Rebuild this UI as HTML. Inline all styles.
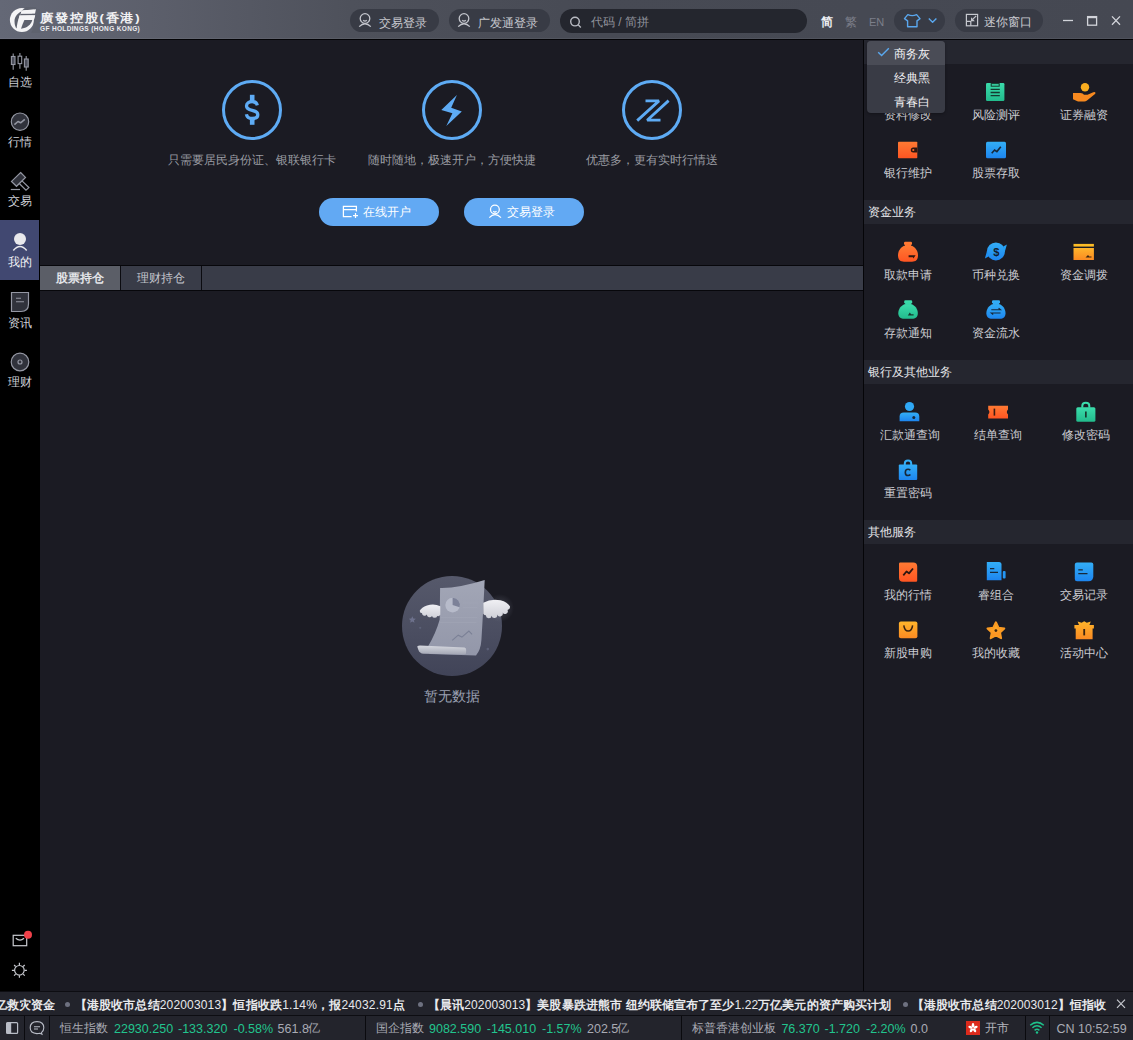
<!DOCTYPE html>
<html><head><meta charset="utf-8">
<style>
*{box-sizing:border-box}
html,body{margin:0;padding:0;width:1133px;height:1040px;overflow:hidden;background:#1b1c23;font-family:"Liberation Sans",sans-serif;font-size:12px;color:#c8c9cf}
.a{position:absolute}
.t{position:absolute;line-height:12px;white-space:nowrap}
#title{left:0;top:0;width:1133px;height:40px;background:linear-gradient(90deg,#646876 0px,#5c5f6b 150px,#4e515b 350px,#474a54 600px,#454852 1133px)}
#title:after{content:"";position:absolute;left:0;top:38px;width:1133px;height:1px;background:rgba(255,255,255,0.06)}
#titleline{left:0;top:39px;width:1133px;height:1px;background:#030306}
#side{left:0;top:40px;width:40px;height:951px;background:#000}
#main{left:40px;top:40px;width:823px;height:951px;background:#1b1b23}
#vsep{left:863px;top:40px;width:1px;height:951px;background:#050508}
#right{left:864px;top:40px;width:269px;height:951px;background:#1b1b23}
.pill{position:absolute;border-radius:12px;background:#383b45}
.hdr{position:absolute;left:864px;width:269px;height:24px;background:#25262f}
.hdr span{position:absolute;left:4px;top:6px;line-height:12px;color:#e6e6ea}
.it{position:absolute;width:88px;text-align:center}
.it .ic{position:absolute;left:34px;top:0;width:20px;height:20px}
.it .lb{position:absolute;left:0;top:27px;width:88px;line-height:12px;color:#cbccd2}
#ticker{left:0;top:991px;width:1133px;height:25px;background:#22232b;border-top:1px solid #0d0d12;border-bottom:1px solid #0d0d12}
#status{left:0;top:1016px;width:1133px;height:24px;background:#23242c}
.vl{position:absolute;top:1016px;width:1px;height:24px;background:#0a0a0e}
.g{color:#22c48e}
.n{position:absolute;top:1022px;font-size:12.5px;line-height:14px;white-space:nowrap}
</style></head><body>
<div id="title" class="a"></div>
<div id="titleline" class="a"></div>
<div id="side" class="a"></div>
<div id="main" class="a"></div>
<div id="vsep" class="a"></div>
<div id="right" class="a"></div>
<div id="ticker" class="a"></div>
<div id="status" class="a"></div>


<!-- SIDEBAR -->
<div class="a" style="left:0;top:220px;width:39px;height:60px;background:#414871"></div>
<svg class="a" style="left:0;top:40px" width="40" height="360" viewBox="0 40 40 360">
<g stroke="#9497a3" stroke-width="1.1" fill="none">
<path d="M13.2,53.5 V69.8 M19.9,53 V68.8 M26.2,55.9 V70.8"/>
<rect x="11.4" y="56.5" width="3.6" height="8" fill="#4c4f5b"/>
<rect x="18.1" y="56.2" width="3.6" height="7.4" fill="#000"/>
<rect x="24.4" y="59" width="3.8" height="8" fill="#4c4f5b"/>
<circle cx="20" cy="121.7" r="8.7" fill="#30323b" stroke-width="1.2"/>
<path d="M14.4,124.6 L18,121.5 L20.6,122.8 L24.8,119.4" stroke-width="1.6" stroke-linejoin="round"/>
<path d="M20.6,172.5 L25.5,177.4 L16.5,186.3 L11.5,181.4 Z" fill="#30323b" stroke-width="1.2"/>
<path d="M22,180.9 L28.9,187.6 L26,190.2 L19.3,183.5" stroke-width="1.2"/>
<path d="M10.8,189.5 H20" stroke-width="1.2"/>
<path d="M11.5,292.5 H28.5 V304 Q28.5,311.5 21,311.5 H11.5 Z" fill="#30323b" stroke-width="1.2"/>
<path d="M16,298.3 H21 M16,301.8 H24" stroke-width="1.1"/>
<circle cx="20" cy="362" r="8.8" fill="#30323b" stroke-width="1.2"/>
<circle cx="20" cy="362" r="2" stroke-width="1.2"/>
</g>
<circle cx="20" cy="239" r="6" fill="#e8e8ec"/>
<path d="M13.3,250.5 Q20,242.5 26.7,250.5" stroke="#e8e8ec" stroke-width="1.5" fill="none"/>
</svg>
<div class="t" style="left:8px;top:76px;color:#cdcfd6">自选</div>
<div class="t" style="left:8px;top:136px;color:#cdcfd6">行情</div>
<div class="t" style="left:8px;top:195px;color:#cdcfd6">交易</div>
<div class="t" style="left:8px;top:256px;color:#f2f3f6">我的</div>
<div class="t" style="left:8px;top:317px;color:#cdcfd6">资讯</div>
<div class="t" style="left:8px;top:376px;color:#cdcfd6">理财</div>
<svg class="a" style="left:0;top:925px" width="40" height="60" viewBox="0 925 40 60">
<g stroke="#c8cad0" stroke-width="1.2" fill="none">
<rect x="13.2" y="935.3" width="13.5" height="10.4"/>
<path d="M15.8,938.3 Q20,942 24,938.3"/>
<circle cx="19.4" cy="970.3" r="4.8"/>
<path d="M19.4,962.8 V965 M19.4,975.6 V977.8 M11.9,970.3 H14.1 M24.7,970.3 H26.9 M14.1,965 L15.6,966.5 M23.2,974.1 L24.7,975.6 M24.7,965 L23.2,966.5 M15.6,974.1 L14.1,975.6"/>
</g>
<circle cx="28" cy="934.8" r="4" fill="#f0414a"/>
</svg>


<!-- MAIN TOP -->
<svg class="a" style="left:200px;top:70px" width="500" height="80" viewBox="200 70 500 80">
<g fill="none" stroke="#5eabf4" stroke-width="3">
<circle cx="252" cy="110" r="28.5"/>
<circle cx="452" cy="110" r="28.5"/>
<circle cx="652" cy="110" r="28.5"/>
<path d="M257.3,105.4 C256.7,103 254.6,101.6 252.2,101.6 C248.9,101.6 246.5,103.3 246.5,105.9 C246.5,108.7 249,109.5 252.2,110.3 C255.4,111.1 257.8,112.1 257.8,114.7 C257.8,117.1 255.4,118.5 252.2,118.5 C249.1,118.5 246.9,117.1 246.4,114.3" stroke-width="3.3"/>
<path d="M645.5,100.9 H659 L637.2,120.6" stroke-width="2.8" stroke-linejoin="bevel"/>
<path d="M668.6,100.6 L647.2,120.2 H660.5" stroke-width="2.8" stroke-linejoin="bevel"/>
</g>
<rect x="249.9" y="94.8" width="4.6" height="7" fill="#5eabf4"/>
<rect x="249.9" y="117.8" width="4.6" height="7" fill="#5eabf4"/>
<path d="M456.9,95 L441.3,110 L452.4,113.2 L446.3,126 L461.8,111.4 L451.2,107.7 Z" fill="#5eabf4"/>
</svg>
<div class="t" style="left:168px;top:154px;color:#9a9ba2">只需要居民身份证、银联银行卡</div>
<div class="t" style="left:368px;top:154px;color:#9a9ba2">随时随地，极速开户，方便快捷</div>
<div class="t" style="left:586px;top:154px;color:#9a9ba2">优惠多，更有实时行情送</div>

<div class="a" style="left:319px;top:198px;width:120px;height:28px;border-radius:14px;background:#62a9f3"></div>
<div class="a" style="left:464px;top:198px;width:120px;height:28px;border-radius:14px;background:#62a9f3"></div>
<svg class="a" style="left:338px;top:200px" width="170" height="24" viewBox="338 200 170 24">
<g fill="none" stroke="#fff" stroke-width="1.25">
<path d="M351.6,216.5 H343.4 V206.4 H356.4 V211.4 M343.4,209.5 H356.4 M355.5,213 V218 M353,215.5 H358"/>
<circle cx="494.9" cy="209.5" r="4.4"/>
<path d="M493.3,211.3 Q494.9,213 496.5,211.3"/>
<path d="M489.3,217.6 Q495,211.5 501,217.6"/>
</g>
</svg>
<div class="t" style="left:363px;top:206px;color:#fff">在线开户</div>
<div class="t" style="left:507px;top:206px;color:#fff">交易登录</div>

<!-- TABS -->
<div class="a" style="left:40px;top:265px;width:823px;height:26px;background:#07070b"></div>
<div class="a" style="left:40px;top:266px;width:823px;height:24px;background:#393c48"></div>
<div class="a" style="left:40px;top:266px;width:80px;height:24px;background:#5b5e67"></div>
<div class="a" style="left:120px;top:266px;width:1px;height:24px;background:#0b0b10"></div>
<div class="a" style="left:201px;top:266px;width:1px;height:24px;background:#0b0b10"></div>
<div class="t" style="left:56px;top:272px;font-weight:bold;color:#e4e5e9">股票持仓</div>
<div class="t" style="left:137px;top:272px;color:#c4c5cc">理财持仓</div>


<!-- RIGHT PANEL -->
<div class="hdr" style="top:40px"><span></span></div>
<div class="hdr" style="top:200px"><span>资金业务</span></div>
<div class="hdr" style="top:360px"><span>银行及其他业务</span></div>
<div class="hdr" style="top:520px"><span>其他服务</span></div>
<svg class="a" style="left:864px;top:40px" width="269" height="620" viewBox="864 40 269 620">
<defs>
<linearGradient id="gT" x1="0" y1="0" x2="0" y2="1"><stop offset="0" stop-color="#3bdcab"/><stop offset="1" stop-color="#22bb8c"/></linearGradient>
<linearGradient id="gR" x1="0" y1="0" x2="0" y2="1"><stop offset="0" stop-color="#ff7a33"/><stop offset="1" stop-color="#ff5522"/></linearGradient>
<linearGradient id="gB" x1="0" y1="0" x2="0" y2="1"><stop offset="0" stop-color="#33aef6"/><stop offset="1" stop-color="#1d85ef"/></linearGradient>
<linearGradient id="gO" x1="0" y1="0" x2="0" y2="1"><stop offset="0" stop-color="#ffb52b"/><stop offset="1" stop-color="#fb8a22"/></linearGradient>
</defs>
<!-- clipboard -->
<rect x="986" y="83" width="18.4" height="18" rx="1.2" fill="url(#gT)"/>
<rect x="991.2" y="83.6" width="8" height="2.6" fill="none" stroke="#16332b" stroke-width="1"/>
<path d="M990.6,89.3 H999.8 M990.6,92.5 H999.8 M990.6,95.7 H999.8" stroke="#153a30" stroke-width="1.3"/>
<!-- hand coin -->
<circle cx="1085" cy="87.2" r="4.2" fill="#f9ad1f"/>
<path d="M1073,93 H1080.5 Q1083,93 1084,94.8 H1087.5 L1093.3,92.2 Q1096.2,91.5 1095.3,93.8 L1087,100.6 Q1085.8,101.5 1084.3,101.5 H1078 L1073,99.3 Z" fill="#f7891f"/>
<!-- wallet -->
<rect x="898" y="141.8" width="19.3" height="16.4" rx="0.8" fill="url(#gR)"/>
<path d="M913.3,147.5 H917.3 V152.5 H913.3 A2.5,2.5 0 0 1 913.3,147.5 Z" fill="#2e1610"/><circle cx="913.3" cy="150" r="1.1" fill="#ff6a2a"/>
<!-- chart -->
<rect x="986" y="141.8" width="20" height="16.4" rx="1.5" fill="url(#gB)"/>
<path d="M991.7,153.2 L994.6,150 L996.9,151.6 L1000.8,146.8" fill="none" stroke="#17283a" stroke-width="1.6"/>
<!-- bag orange -->
<rect x="904" y="241.8" width="8" height="3.2" rx="1.2" fill="#ff7a33"/>
<rect x="905" y="244" width="6" height="2.5" fill="#ff7631"/>
<path d="M904,245.8 C899.5,248.2 898,252 898,255.5 C898,260 900.5,261.7 904,261.7 H912 C915.5,261.7 918,260 918,255.5 C918,252 916.5,248.2 912,245.8 Z" fill="url(#gR)"/>
<path d="M908.6,255.2 H915.6 L913.4,258.5 L913,257.3 H908.6 Z" fill="#2e1610"/>
<!-- exchange coin -->
<circle cx="995.9" cy="251.4" r="9" fill="url(#gB)"/>
<path d="M1004.6,252.5 L1006.9,244.4 L1003.2,246.4 Z" fill="#25a0f5"/>
<path d="M987.2,250.3 L984.9,258.4 L988.6,256.4 Z" fill="#2090f2"/>
<text x="996.2" y="255.6" font-family="Liberation Sans" font-size="11" font-weight="bold" fill="#12202e" text-anchor="middle">$</text>
<!-- card -->
<rect x="1073.5" y="243.9" width="20.4" height="2.7" fill="#fcbc26"/>
<rect x="1073.5" y="248" width="20.4" height="12" fill="url(#gO)"/>
<path d="M1085.5,257.6 L1088,255 L1089.3,256.5 H1091.5 V257.6 Z" fill="#3a2410"/>
<!-- bag green -->
<rect x="904.2" y="300.2" width="8" height="3.2" rx="1.2" fill="#3bdcab"/>
<rect x="905.2" y="302.4" width="6" height="2.5" fill="#38d8a8"/>
<path d="M904.2,304.2 C899.8,306.5 898.3,310 898.3,313.3 C898.3,317.3 900.7,318.8 904.2,318.8 H912 C915.4,318.8 917.8,317.3 917.8,313.3 C917.8,310 916.4,306.5 912,304.2 Z" fill="url(#gT)"/>
<path d="M907.8,315.4 L909.8,312.6 L911.1,314.3 H913.6 V315.4 Z" fill="#163a2f"/>
<!-- bag blue -->
<rect x="992" y="300.2" width="8" height="3.2" rx="1.2" fill="#33aef6"/>
<rect x="993" y="302.4" width="6" height="2.5" fill="#30aaf6"/>
<path d="M992,304.2 C987.8,306.5 986.4,310 986.4,313.3 C986.4,317.3 988.7,318.8 992,318.8 H1000 C1003.2,318.8 1005.5,317.3 1005.5,313.3 C1005.5,310 1004.1,306.5 1000,304.2 Z" fill="url(#gB)"/>
<path d="M991.3,309.8 H1000.5 L998.6,308.3 M1000.5,313 H991.3 L993.2,314.5" fill="none" stroke="#16283a" stroke-width="1.1"/>
<!-- user blue -->
<circle cx="909.5" cy="406.5" r="4.6" fill="#2fa8f5"/>
<path d="M899.6,421.2 V416.5 Q899.6,412.6 903.8,412.6 H915.1 Q919.3,412.6 919.3,416.5 V421.2 Z" fill="url(#gB)"/>
<circle cx="913.8" cy="417.4" r="1.5" fill="#16283a"/>
<!-- ticket -->
<path d="M988.2,405.8 H1008 V409.6 Q1005.6,412.1 1008,414.6 V418.4 H988.2 V414.6 Q990.6,412.1 988.2,409.6 Z" fill="url(#gR)"/>
<rect x="993.6" y="408.6" width="1.6" height="7" fill="#3b1c12"/>
<!-- lock teal -->
<path d="M1082.3,407.8 V405.7 Q1082.3,402.7 1085.8,402.7 Q1089.3,402.7 1089.3,405.7 V407.8" fill="none" stroke="#3bdcab" stroke-width="2"/>
<rect x="1076.3" y="407.3" width="19.1" height="14.4" rx="1.5" fill="url(#gT)"/>
<rect x="1085" y="411.5" width="1.7" height="6" fill="#163a2f"/>
<!-- lock blue C -->
<path d="M904.8,465 V463.5 Q904.8,460.6 908,460.6 Q911.2,460.6 911.2,463.5 V465" fill="none" stroke="#33aef6" stroke-width="2"/>
<rect x="898.8" y="464.5" width="18.4" height="15.4" rx="1" fill="url(#gB)"/>
<path d="M910.3,470.3 Q909.5,469.3 908,469.3 Q905.3,469.3 905.3,472.4 Q905.3,475.5 908,475.5 Q909.5,475.5 910.4,474.4" fill="none" stroke="#16283a" stroke-width="1.6"/>
<!-- orange chart -->
<path d="M900.2,562.6 H913.2 Q917.2,562.6 917.2,566.6 V580.5 Q917.2,581.7 916,581.7 H903 Q899,581.7 899,577.7 V563.8 Q899,562.6 900.2,562.6 Z" fill="url(#gR)"/>
<path d="M903.3,575.3 L906.5,571.5 L909,573.3 L913,568.5" fill="none" stroke="#2e1610" stroke-width="1.8" stroke-linejoin="round"/>
<!-- doc w/ tab -->
<path d="M986.8,562 H999 Q1001.5,562 1001.5,564.5 V580.2 H986.8 Z" fill="url(#gB)"/>
<rect x="1002.8" y="571" width="2.8" height="7.6" rx="1" fill="#2596f2"/>
<path d="M990,568.6 H994.3 M990,572.4 H998" stroke="#16283a" stroke-width="1.3"/>
<!-- doc rounded -->
<path d="M1077,562.6 H1091.3 Q1093.3,562.6 1093.3,564.6 V576.2 Q1093.3,581.2 1088.3,581.2 H1077 Q1074.8,581.2 1074.8,579 V564.8 Q1074.8,562.6 1077,562.6 Z" fill="url(#gB)"/>
<path d="M1078.3,569.8 H1082.8 M1078.3,573.6 H1087.5" stroke="#16283a" stroke-width="1.3"/>
<!-- bag yellow -->
<rect x="898.9" y="621.6" width="18.5" height="16.6" rx="2" fill="url(#gO)"/>
<path d="M903.8,625.3 Q904.5,631 908.2,631 Q911.9,631 912.6,625.3" fill="none" stroke="#3a2410" stroke-width="1.5"/>
<!-- star -->
<path d="M995.9,622.3 L998.5,627.7 L1004.3,628.5 L1000,632.5 L1001.1,638.2 L995.9,635.3 L990.7,638.2 L991.8,632.5 L987.5,628.5 L993.3,627.7 Z" fill="url(#gO)" stroke="#fa9a22" stroke-width="2" stroke-linejoin="round"/>
<circle cx="995.9" cy="630.6" r="1.4" fill="#3a2410"/>
<!-- gift -->
<path d="M1074.4,625 H1079 L1077.6,621.6 L1081.6,622.8 L1084.2,621.2 L1086.8,622.8 L1090.8,621.6 L1089.4,625 H1093.9 V628.6 H1092.6 V639.2 H1075.7 V628.6 H1074.4 Z" fill="url(#gO)"/>
<rect x="1083.3" y="629" width="1.8" height="6.4" fill="#3a2410"/>
</svg>
<div class="t" style="left:864px;top:109px;width:88px;text-align:center;color:#cbccd2">资料修改</div>
<div class="t" style="left:952px;top:109px;width:88px;text-align:center;color:#cbccd2">风险测评</div>
<div class="t" style="left:1040px;top:109px;width:88px;text-align:center;color:#cbccd2">证券融资</div>
<div class="t" style="left:864px;top:167px;width:88px;text-align:center;color:#cbccd2">银行维护</div>
<div class="t" style="left:952px;top:167px;width:88px;text-align:center;color:#cbccd2">股票存取</div>
<div class="t" style="left:864px;top:269px;width:88px;text-align:center;color:#cbccd2">取款申请</div>
<div class="t" style="left:952px;top:269px;width:88px;text-align:center;color:#cbccd2">币种兑换</div>
<div class="t" style="left:1040px;top:269px;width:88px;text-align:center;color:#cbccd2">资金调拨</div>
<div class="t" style="left:864px;top:327px;width:88px;text-align:center;color:#cbccd2">存款通知</div>
<div class="t" style="left:952px;top:327px;width:88px;text-align:center;color:#cbccd2">资金流水</div>
<div class="t" style="left:865.5px;top:429px;width:88px;text-align:center;color:#cbccd2">汇款通查询</div>
<div class="t" style="left:953.5px;top:429px;width:88px;text-align:center;color:#cbccd2">结单查询</div>
<div class="t" style="left:1041.5px;top:429px;width:88px;text-align:center;color:#cbccd2">修改密码</div>
<div class="t" style="left:864px;top:487px;width:88px;text-align:center;color:#cbccd2">重置密码</div>
<div class="t" style="left:864px;top:589px;width:88px;text-align:center;color:#cbccd2">我的行情</div>
<div class="t" style="left:952px;top:589px;width:88px;text-align:center;color:#cbccd2">睿组合</div>
<div class="t" style="left:1040px;top:589px;width:88px;text-align:center;color:#cbccd2">交易记录</div>
<div class="t" style="left:864px;top:647px;width:88px;text-align:center;color:#cbccd2">新股申购</div>
<div class="t" style="left:952px;top:647px;width:88px;text-align:center;color:#cbccd2">我的收藏</div>
<div class="t" style="left:1040px;top:647px;width:88px;text-align:center;color:#cbccd2">活动中心</div>

<!-- DROPDOWN -->
<div class="a" style="left:867px;top:41px;width:78px;height:72px;border-radius:4px;background:#393b45;box-shadow:0 1px 3px rgba(0,0,0,0.3)"></div>
<div class="a" style="left:867px;top:41px;width:78px;height:24px;border-radius:4px 4px 0 0;background:#4a4c56"></div>
<svg class="a" style="left:874px;top:44px" width="18" height="16" viewBox="874 44 18 16"><path d="M878.2,52.3 L881.6,55.6 L888.8,48.3" fill="none" stroke="#5aa9f0" stroke-width="1.4"/></svg>
<div class="t" style="left:894px;top:48px;color:#f4f4f6">商务灰</div>
<div class="t" style="left:894px;top:72px;color:#f4f4f6">经典黑</div>
<div class="t" style="left:894px;top:96px;color:#f4f4f6">青春白</div>


<!-- EMPTY STATE -->
<svg class="a" style="left:390px;top:565px" width="140" height="120" viewBox="390 565 140 120">
<defs>
<linearGradient id="eC" x1="0" y1="0" x2="0" y2="1"><stop offset="0" stop-color="#56596b"/><stop offset="0.55" stop-color="#4b4e61"/><stop offset="1" stop-color="#414458"/></linearGradient>
<linearGradient id="eP" x1="0" y1="0" x2="0" y2="1"><stop offset="0" stop-color="#a2a6b6"/><stop offset="1" stop-color="#9397a9"/></linearGradient>
<linearGradient id="eR" x1="0" y1="0" x2="0" y2="1"><stop offset="0" stop-color="#d6d8df"/><stop offset="1" stop-color="#a3a6b4"/></linearGradient>
<linearGradient id="eW" x1="0" y1="0" x2="0" y2="1"><stop offset="0" stop-color="#f0f0f4"/><stop offset="1" stop-color="#cfd0d8"/></linearGradient>
<radialGradient id="eG" cx="0.5" cy="0.5" r="0.5"><stop offset="0" stop-color="#9a9eb0" stop-opacity="0.32"/><stop offset="1" stop-color="#9a9eb0" stop-opacity="0"/></radialGradient>
</defs>
<circle cx="452" cy="626" r="50" fill="url(#eC)"/>
<circle cx="500" cy="608" r="14" fill="url(#eG)"/>
<path d="M440.1,588 Q458,588.5 484.7,580.1 L484.3,588 Q483,615 481.4,640 Q480.8,650 476,655.4 L430,654 Q425,650 428,646.4 Q436,633 439.7,619.5 Z" fill="url(#eP)"/>
<path d="M417.2,646.4 Q418.2,645.5 420,645.5 L464.5,647.6 Q466.2,648 466.2,650 L466,653.6 Q465.5,654.5 464,654.5 L423.5,653.8 Q419.5,653.5 418.2,649.5 Z" fill="url(#eR)"/>
<path d="M463,603 H478 M463,607.5 H477.5 M441,617.5 H477 M440,622.5 H476.5" stroke="#a3a7b6" stroke-width="0.5"/>
<circle cx="452.6" cy="605.1" r="7.3" fill="#b7bbca"/>
<path d="M452.6,605.1 V597.8 A7.3,7.3 0 0 1 459.6,607.2 Z" fill="#7c8198"/>
<path d="M452.2,640.3 L458.2,635.2 L461.9,637.1 L468.9,631.1 L472.1,634.3" fill="none" stroke="#7b8096" stroke-width="1.1"/>
<path d="M440.3,606.3 Q434,603 427,605.5 Q421.5,607.5 419.7,610.8 Q419.5,613 422,613.2 A2.6,2.6 0 0 0 426.8,614.6 A2.8,2.8 0 0 0 432,615.9 A2.8,2.8 0 0 0 437.3,616 A2.6,2.6 0 0 0 440.3,614.8 Z" fill="url(#eW)"/>
<path d="M483.3,602.8 Q491,598.5 500.5,600.3 Q507.5,602 510,606.5 Q510.3,609.5 507.5,610 A2.6,2.6 0 0 1 502.6,612.4 A2.8,2.8 0 0 1 497.2,614.6 A2.8,2.8 0 0 1 491.6,615.7 A2.8,2.8 0 0 1 486,615.2 A2.4,2.4 0 0 1 483.3,613.8 Z" fill="url(#eW)"/>
<path d="M412.3,616.3 L413.3,618.6 L415.8,618.8 L413.9,620.4 L414.5,622.8 L412.3,621.5 L410.1,622.8 L410.7,620.4 L408.8,618.8 L411.3,618.6 Z" fill="#6d718c"/>
<circle cx="420.2" cy="627.8" r="1.1" fill="#5c6077"/>
<circle cx="487.8" cy="649.1" r="1.3" fill="#5c6077"/>
</svg>
<div class="t" style="left:424px;top:689px;font-size:14px;line-height:14px;color:#9aa0b2">暂无数据</div>

<!-- TICKER -->
<div class="t" style="left:-5.5px;top:999px;font-weight:bold;color:#e8e9ec">亿救灾资金</div>
<div class="a" style="left:65px;top:1001.5px;width:5px;height:5px;border-radius:3px;background:#6e7180"></div>
<div class="t" style="left:74.5px;top:999px;font-weight:bold;color:#e8e9ec;letter-spacing:0.17px">【港股收市总结<span style="font-weight:normal">202003013</span>】恒指收跌<span style="font-weight:normal">1.14%</span>，报<span style="font-weight:normal">24032.91</span>点</div>
<div class="a" style="left:417.5px;top:1001.5px;width:5px;height:5px;border-radius:3px;background:#6e7180"></div>
<div class="t" style="left:428px;top:999px;font-weight:bold;color:#e8e9ec;letter-spacing:0.1px">【晨讯<span style="font-weight:normal">202003013</span>】美股暴跌进熊市 纽约联储宣布了至少<span style="font-weight:normal">1.22</span>万亿美元的资产购买计划</div>
<div class="a" style="left:903px;top:1001.5px;width:5px;height:5px;border-radius:3px;background:#6e7180"></div>
<div class="t" style="left:912px;top:999px;font-weight:bold;color:#e8e9ec;letter-spacing:0.1px">【港股收市总结<span style="font-weight:normal">202003012</span>】恒指收</div>
<div class="a" style="left:1110px;top:992px;width:23px;height:23px;background:#22232b"></div>
<svg class="a" style="left:1112px;top:995px" width="18" height="16" viewBox="1112 995 18 16"><path d="M1117,999.6 L1125,1007.8 M1125,999.6 L1117,1007.8" stroke="#c6c8ce" stroke-width="1.2"/></svg>

<!-- STATUS -->
<div class="vl" style="left:24px"></div>
<div class="vl" style="left:49px"></div>
<div class="vl" style="left:365px"></div>
<div class="vl" style="left:681px"></div>
<div class="vl" style="left:1025px"></div>
<div class="vl" style="left:1049px"></div>
<svg class="a" style="left:0;top:1016px" width="50" height="24" viewBox="0 1016 50 24">
<rect x="6.6" y="1022.6" width="11" height="10.8" rx="1" fill="none" stroke="#b8bcc6" stroke-width="1.2"/>
<rect x="6.6" y="1022.6" width="4.6" height="10.8" fill="#b8bcc6"/>
<path d="M36.9,1033.6 Q30.2,1033.4 30.2,1027.8 Q30.2,1021.6 37,1021.6 Q43.8,1021.6 43.8,1027.8 Q43.8,1031 41.4,1032.6 L42,1034.3 L39.8,1033.3 Q38.5,1033.6 36.9,1033.6 Z" fill="none" stroke="#b8bcc6" stroke-width="1.1"/>
<path d="M34,1026.7 H40 M34,1029 H38" stroke="#b8bcc6" stroke-width="1.1"/>
</svg>
<div class="t" style="left:60px;top:1022px;color:#a9abb4">恒生指数</div>
<div class="n g" style="left:114px">22930.250</div>
<div class="n g" style="left:178px">-133.320</div>
<div class="n g" style="left:233.5px">-0.58%</div>
<div class="n" style="left:277.6px;color:#a9abb4">561.8</div><div class="t" style="left:308px;top:1022px;color:#a9abb4">亿</div>
<div class="t" style="left:376px;top:1022px;color:#a9abb4">国企指数</div>
<div class="n g" style="left:429px">9082.590</div>
<div class="n g" style="left:486.8px">-145.010</div>
<div class="n g" style="left:542px">-1.57%</div>
<div class="n" style="left:587px;color:#a9abb4">202.5</div><div class="t" style="left:617px;top:1022px;color:#a9abb4">亿</div>
<div class="t" style="left:692px;top:1022px;color:#a9abb4">标普香港创业板</div>
<div class="n g" style="left:781.4px">76.370</div>
<div class="n g" style="left:824.5px">-1.720</div>
<div class="n g" style="left:866px">-2.20%</div>
<div class="n" style="left:910.5px;color:#a9abb4">0.0</div>
<svg class="a" style="left:964px;top:1019px" width="18" height="18" viewBox="964 1019 18 18">
<rect x="966" y="1021" width="14" height="14" fill="#dc2a1c"/>
<g fill="#fff"><ellipse cx="973" cy="1025.3" rx="1.3" ry="2.2"/><ellipse cx="973" cy="1025.3" rx="1.3" ry="2.2" transform="rotate(72 973 1028)"/><ellipse cx="973" cy="1025.3" rx="1.3" ry="2.2" transform="rotate(144 973 1028)"/><ellipse cx="973" cy="1025.3" rx="1.3" ry="2.2" transform="rotate(216 973 1028)"/><ellipse cx="973" cy="1025.3" rx="1.3" ry="2.2" transform="rotate(288 973 1028)"/></g>
</svg>
<div class="t" style="left:985px;top:1022px;color:#b3b5bd">开市</div>
<svg class="a" style="left:1028px;top:1018px" width="18" height="18" viewBox="1028 1018 18 18">
<g fill="none" stroke="#1ec28b" stroke-width="1.5"><path d="M1030.2,1025.2 Q1037,1019.5 1043.8,1025.2"/><path d="M1032.4,1027.8 Q1037,1023.8 1041.6,1027.8"/><path d="M1034.6,1030.3 Q1037,1028.4 1039.4,1030.3"/></g>
<circle cx="1037" cy="1032.5" r="1.2" fill="#1ec28b"/>
</svg>
<div class="n" style="left:1056.5px;color:#a9abb4">CN 10:52:59</div>

<!-- TITLE BAR -->
<svg class="a" style="left:0;top:0" width="46" height="36" viewBox="0 0 46 36">
<circle cx="21.9" cy="20.1" r="12" fill="#f4f4f6"/>
<path fill="#f4f4f6" d="M21.9,10.4 L36,9.3 L35,13.5 L20.8,13.6 Z"/>
<path fill="#f4f4f6" d="M19.6,15.6 L35.2,15.3 L33.9,19.9 L18.7,19.9 Z"/>
<g fill="#5e626e">
<path d="M23.8,10.2 C18,12.5 14.5,16.5 14.5,21.2 C14.5,24.8 15.5,27.3 16.6,28.6 C17,24.5 17.9,20.5 19.6,15.6 L20.8,13.6 L21.9,10.4 Z"/>
<path d="M20.8,13.7 L35.5,13.55 L35.2,15.35 L19.6,15.6 Z"/>
<path d="M24.4,19.95 L32.3,19.95 C31,24.6 27,28 21,28.7 C22,25.6 23.1,22.6 24.4,19.95 Z"/>
<path d="M33.8,9 L40,9 L40,33 L31,33 C33,30 34.6,25 34.2,19.9 L35.2,15.35 Z" />
<path d="M26,7 L36.2,7 L36,9.3 L21.9,10.4 Z"/>
</g>
<path fill="#f4f4f6" d="M21.9,10.4 L36,9.3 L35,13.5 L20.8,13.6 Z"/>
<path fill="#f4f4f6" d="M19.6,15.6 L35.2,15.3 L33.9,19.9 L18.7,19.9 Z"/>
</svg>
<div class="t" style="left:40px;top:12px;font-size:13px;line-height:13px;font-weight:bold;color:#f2f2f4;letter-spacing:1.85px;transform:scaleY(0.9);transform-origin:0 0">廣發控股(香港)</div>
<div class="t" style="left:40px;top:25px;font-size:6.5px;line-height:7px;font-weight:bold;color:#ececf0;letter-spacing:0.35px">GF HOLDINGS (HONG KONG)</div>

<div class="pill" style="left:350px;top:9px;width:89px;height:23px"></div>
<svg class="a" style="left:354px;top:10px" width="22" height="22" viewBox="354 10 22 22"><g fill="none" stroke="#c3c5cc" stroke-width="1.3"><circle cx="365" cy="18.5" r="4.8"/><path d="M363.2,20.2 Q365,22 366.8,20.2"/><path d="M359.2,26.6 Q365,21 370.8,26.6"/></g></svg>
<div class="t" style="left:379px;top:17px;color:#c6c7cd">交易登录</div>

<div class="pill" style="left:449px;top:9px;width:101px;height:23px"></div>
<svg class="a" style="left:453px;top:10px" width="22" height="22" viewBox="453 10 22 22"><g fill="none" stroke="#c3c5cc" stroke-width="1.3"><circle cx="464" cy="18.5" r="4.8"/><path d="M462.2,20.2 Q464,22 465.8,20.2"/><path d="M458.2,26.6 Q464,21 469.8,26.6"/></g></svg>
<div class="t" style="left:478px;top:17px;color:#c6c7cd">广发通登录</div>

<div class="pill" style="left:560px;top:9px;width:247px;height:24px;background:#24262e"></div>
<svg class="a" style="left:566px;top:13px" width="18" height="18" viewBox="566 13 18 18"><g fill="none" stroke="#b9bbc3" stroke-width="1.4"><circle cx="575" cy="21.6" r="4.3"/><path d="M578.2,24.8 L580.8,27.4"/></g></svg>
<div class="t" style="left:591px;top:16px;color:#8f919a">代码 / 简拼</div>

<div class="t" style="left:821px;top:16px;font-weight:bold;color:#eceef2">简</div>
<div class="t" style="left:845px;top:16px;color:#7c7f8a">繁</div>
<div class="t" style="left:869px;top:16px;font-size:11px;color:#7c7f8a">EN</div>

<div class="pill" style="left:894px;top:9px;width:51px;height:23px"></div>
<svg class="a" style="left:900px;top:12px" width="40" height="18" viewBox="900 12 40 18"><g fill="none" stroke="#5aa7ee" stroke-width="1.4" stroke-linejoin="round"><path d="M907.8,14.6 Q912.2,16.6 916.6,14.6 L920,18.6 L917,20.9 V26.8 H907.6 V20.9 L904.5,18.6 Z"/><path d="M928.8,18.4 L932.6,22.2 L936.4,18.4"/></g></svg>

<div class="pill" style="left:955px;top:9px;width:88px;height:23px"></div>
<svg class="a" style="left:964px;top:12px" width="16" height="16" viewBox="964 12 16 16"><g fill="none" stroke="#c6c8cf" stroke-width="1.2"><rect x="966.4" y="14.4" width="11.2" height="11.4"/><path d="M966.4,21.4 H970.8 V25.8"/><path d="M976.2,15.8 L972.6,19.4"/></g><path d="M971,17.3 L971,21.2 L974.9,21.2 Z" fill="#c6c8cf"/></svg>
<div class="t" style="left:984px;top:16px;color:#c9cad0">迷你窗口</div>

<svg class="a" style="left:1055px;top:8px" width="78" height="24" viewBox="1055 8 78 24"><g fill="none" stroke="#d2d4da" stroke-width="1.3"><path d="M1063,20.5 L1073,20.5"/><rect x="1087.6" y="16.6" width="9" height="8.6"/><path d="M1087.6,17.2 L1096.6,17.2" stroke-width="2"/><path d="M1112,16.4 L1120,24.8 M1120,16.4 L1112,24.8"/></g></svg>

</body></html>
